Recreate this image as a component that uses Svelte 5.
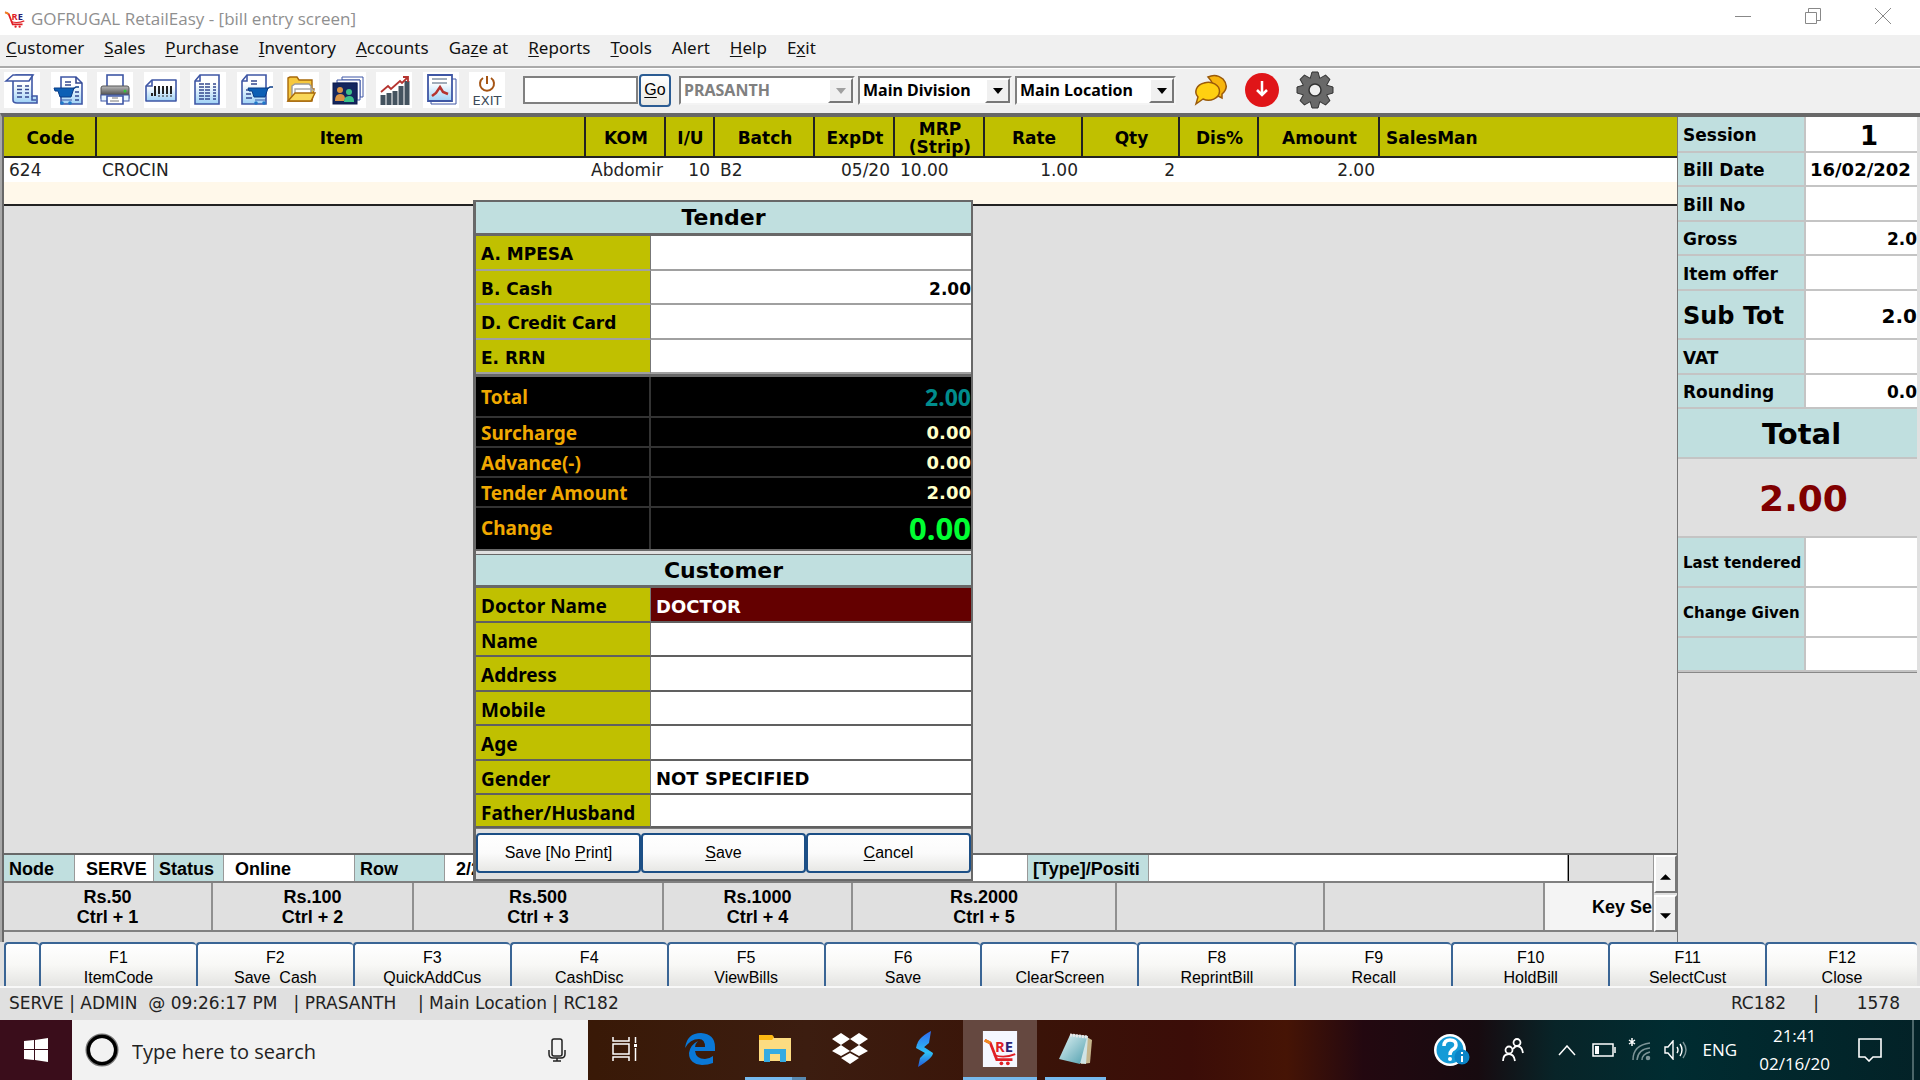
<script lang="ts">
  type Field = { id: string; label: string; value: string };

  // [text before the access key, access key, rest]
  const menu = [
    ['', 'C', 'ustomer'], ['', 'S', 'ales'], ['', 'P', 'urchase'], ['', 'I', 'nventory'],
    ['', 'A', 'ccounts'], ['Ga', 'z', 'e at'], ['', 'R', 'eports'], ['', 'T', 'ools'],
    ['Alert', '', ''], ['', 'H', 'elp'], ['E', 'x', 'it'],
  ];

  const tools = ['bill', 'billcart', 'printer', 'barcode', 'list', 'listcart', 'folder', 'people', 'chart', 'report', 'exit'];

  const columns = [
    { name: 'Code', width: 93, value: '624', align: 'left' },
    { name: 'Item', width: 489, value: 'CROCIN', align: 'left' },
    { name: 'KOM', width: 80, value: 'Abdomir', align: 'left' },
    { name: 'I/U', width: 49, value: '10', align: 'right' },
    { name: 'Batch', width: 100, value: 'B2', align: 'left' },
    { name: 'ExpDt', width: 80, value: '05/20', align: 'right' },
    { name: 'MRP (Strip)', width: 90, value: '10.00', align: 'left' },
    { name: 'Rate', width: 98, value: '1.00', align: 'right' },
    { name: 'Qty', width: 97, value: '2', align: 'right' },
    { name: 'Dis%', width: 79, value: '', align: 'right' },
    { name: 'Amount', width: 121, value: '2.00', align: 'right' },
    { name: 'SalesMan', width: 0, value: '', align: 'left' },
  ];

  let tender: Field[] = $state([
    { id: 'mpesa', label: 'A. MPESA', value: '' },
    { id: 'cash', label: 'B. Cash', value: '2.00' },
    { id: 'card', label: 'D. Credit Card', value: '' },
    { id: 'rrn', label: 'E. RRN', value: '' },
  ]);

  const totals = [
    { label: 'Total', value: '2.00', kind: 'total' },
    { label: 'Surcharge', value: '0.00', kind: '' },
    { label: 'Advance(-)', value: '0.00', kind: '' },
    { label: 'Tender Amount', value: '2.00', kind: '' },
    { label: 'Change', value: '0.00', kind: 'change' },
  ];

  let customer: Field[] = $state([
    { id: 'doctor', label: 'Doctor Name', value: 'DOCTOR' },
    { id: 'name', label: 'Name', value: '' },
    { id: 'address', label: 'Address', value: '' },
    { id: 'mobile', label: 'Mobile', value: '' },
    { id: 'age', label: 'Age', value: '' },
    { id: 'gender', label: 'Gender', value: 'NOT SPECIFIED' },
    { id: 'father', label: 'Father/Husband', value: '' },
  ]);

  const summary = [
    { label: 'Session', value: '1', kind: 'session' },
    { label: 'Bill Date', value: '16/02/202', kind: 'date' },
    { label: 'Bill No', value: '', kind: '' },
    { label: 'Gross', value: '2.0', kind: '' },
    { label: 'Item offer', value: '', kind: '' },
    { label: 'Sub Tot', value: '2.0', kind: 'sub' },
    { label: 'VAT', value: '', kind: '' },
    { label: 'Rounding', value: '0.0', kind: '' },
  ];

  const cash = [
    ['Rs.50', 'Ctrl + 1'], ['Rs.100', 'Ctrl + 2'], ['Rs.500', 'Ctrl + 3'],
    ['Rs.1000', 'Ctrl + 4'], ['Rs.2000', 'Ctrl + 5'], ['', ''], ['', ''],
  ];

  const fkeys = [
    'ItemCode', 'Save  Cash', 'QuickAddCus', 'CashDisc', 'ViewBills', 'Save',
    'ClearScreen', 'ReprintBill', 'Recall', 'HoldBill', 'SelectCust', 'Close',
  ];

  let quick = $state('');
</script>

{#snippet cartLogo()}
  <path d="M1 9 L7 12 L14 30 H31" fill="none" stroke="#e01f26" stroke-width="3" />
  <path d="M1 9 L7 12" fill="none" stroke="#f08a1d" stroke-width="3" />
  <path d="M11 25 Q22 29 34 24" fill="none" stroke="#e01f26" stroke-width="2" />
  <circle cx="19" cy="34" r="2" fill="#e01f26" /><circle cx="26" cy="34" r="2" fill="#e01f26" />
  <text x="12" y="22" font-size="16" font-weight="bold" font-family="Open Sans, sans-serif"><tspan fill="#e01f26">R</tspan><tspan fill="#2a2273">E</tspan></text>
{/snippet}

{#snippet cart(dx: number)}
  <g transform="translate({dx} 0)">
    <path d="M2 16 H22 L19 25 H8 L6 19 H3 Z" fill="#0d5fb5" stroke="#0a3d86" />
    <path d="M21 17 L24 15 H27" fill="none" stroke="#0a3d86" stroke-width="1.5" />
    <path d="M9 28 H20" stroke="#3d5aa8" />
    <circle cx="10" cy="31" r="1.8" fill="#1f77c9" /><circle cx="18" cy="31" r="1.8" fill="#1f77c9" />
  </g>
{/snippet}

{#snippet toolIcon(name: string)}
  <svg viewBox="0 0 36 36" width="36" height="36" aria-hidden="true">
    {#if name === 'bill'}
      <path d="M9 9 L12 3 H28 V24 H33 V31 H13 Q9 31 9 28 Z" fill="url(#sheet)" stroke="#3f57a5" stroke-width="1.6" />
      <path d="M2 9 L9 3 H29 L25 9 Z" fill="#fff" stroke="#3f57a5" stroke-width="1.6" />
      <path d="M13 14 H18 M13 17.5 H18 M13 21 H18 M13 25 H18 M21 14 H25 M21 17.5 H25 M21 21 H25 M21 25 H25" stroke="#34488f" stroke-width="1.6" />
      <path d="M28 24 V28 H32" fill="none" stroke="#3f57a5" stroke-width="1.6" />
    {:else if name === 'billcart'}
      <path d="M10 5 H25 L31 11 V32 H10 Z" fill="url(#sheet)" stroke="#3f57a5" stroke-width="1.6" />
      <path d="M25 5 V11 H31 M14 10 H20 M14 13 H20 M24 20 H28 M24 24 H28 M24 28 H28" fill="none" stroke="#34488f" stroke-width="1.6" />
      {@render cart(1)}
    {:else if name === 'printer'}
      <rect x="10" y="3" width="16" height="14" fill="#fff" stroke="#3f57a5" stroke-width="1.6" />
      <rect x="4" y="14" width="28" height="14" rx="2" fill="url(#metal)" stroke="#555" />
      <rect x="4" y="23" width="28" height="6" fill="#e5f2fd" stroke="#3f57a5" />
      <circle cx="28" cy="19" r="1.5" fill="#35c13c" />
      <path d="M10 24 H26 V32 H10 Z" fill="#fff" stroke="#3f57a5" stroke-width="1.6" />
      <path d="M15 26 H21 M13 29 H22" stroke="#777" />
    {:else if name === 'barcode'}
      <path d="M8 8 H32 V29 H2 V14 Z" fill="url(#sheet)" stroke="#3f57a5" stroke-width="1.6" stroke-linejoin="round" />
      <path d="M2 14 H8 V8" fill="none" stroke="#3f57a5" stroke-width="1.6" />
      <path d="M8 21 V24 M11 14 V24 M15 14 V22 M19 14 V22 M23 14 V22 M27 14 V22" stroke="#222" stroke-width="2" />
      <path d="M14 24 H28" stroke="#222" stroke-dasharray="2 2" />
    {:else if name === 'list' || name === 'listcart'}
      <path d="M10 3 H29 V32 H5 V9 Z" fill="url(#sheet)" stroke="#3f57a5" stroke-width="1.6" />
      <path d="M5 9 H10 V3" fill="none" stroke="#3f57a5" stroke-width="1.6" />
      {#if name === 'list'}
        <path d="M9 12 H21 M9 15 H21 M9 18 H21 M9 21 H21 M9 24 H21 M9 27 H21 M23 12 H26 M23 15 H26 M23 18 H26 M23 21 H26 M23 24 H26 M23 27 H26" stroke="#34488f" stroke-width="1.5" stroke-dasharray="5 1" />
      {:else}
        <path d="M14 9 H20 M14 12 H20 M9 18 H13 M9 22 H14 M9 26 H15" stroke="#34488f" stroke-width="1.6" />
        {@render cart(9)}
      {/if}
    {:else if name === 'folder'}
      <path d="M5 29 V6 L7 5 H14 L16 8 H29 V17 H31 L29 29 Z" fill="#f6c83e" stroke="#a8690b" stroke-width="1.4" />
      <path d="M9 24 V14 L12 12 H26 L28 14 V23" fill="#fff" stroke="#999" stroke-width="1.4" />
      <path d="M12 22 V17 H29 L31 19" fill="none" stroke="#aaa" stroke-width="1.4" />
      <path d="M5 29 L12 21 H32 L28 29 Z" fill="#f9d758" stroke="#a8690b" stroke-width="1.4" />
    {:else if name === 'people'}
      <path d="M12 5 H33 V25 H30 V8 H12 Z" fill="#fff" stroke="#3f57a5" />
      <path d="M7 8 H30 V28 H27 V11 H7 Z" fill="#fff" stroke="#3f57a5" />
      <rect x="3" y="11" width="24" height="21" fill="#14265e" stroke="#0d1a4a" />
      <circle cx="10" cy="18" r="3" fill="#d99445" /><path d="M5 29 Q5 22 10 22 Q15 22 15 27 L14 29 Z" fill="#d99445" />
      <circle cx="19" cy="20" r="3" fill="#3cc18b" /><path d="M14 30 Q14 24 19 24 Q24 24 24 29 V30 Z" fill="#3cc18b" />
    {:else if name === 'chart'}
      <path d="M7 33 V23 M13 33 V21 M19 33 V19 M25 33 V14 M31 33 V9" stroke="#44535f" stroke-width="5" />
      <path d="M5 20 L12 14 L15 17 L24 9 L26 11 L32 5 M27 5 H32 V10" fill="none" stroke="#b5332f" stroke-width="1.8" />
    {:else if name === 'report'}
      <path d="M8 7 H33 V32 H8 Z" fill="#fff" stroke="#3f57a5" />
      <path d="M5 3 H29 V29 H5 Z" fill="url(#sheet)" stroke="#3f57a5" stroke-width="1.8" />
      <path d="M9 7 H24 M9 11 H24" stroke="#8293a5" stroke-width="1.5" />
      <path d="M9 24 L13 21 L17 15 L20 20 L25 22" fill="none" stroke="#b5332f" stroke-width="2.5" />
    {:else}
      <path d="M14 6 A7 7 0 1 0 22 6 M18 4 V12" fill="none" stroke="#a55413" stroke-width="2" />
      <text x="18" y="33" font-size="13" text-anchor="middle" font-family="DejaVu Sans, sans-serif" fill="#3c4a57">EXIT</text>
    {/if}
  </svg>
{/snippet}

{#snippet field(f: Field)}
  <div class="field">
    <label for={f.id}>{f.label}</label>
    <input id={f.id} type="text" class:active={f.id === 'doctor'} bind:value={f.value} />
  </div>
{/snippet}

<svg class="defs" width="0" height="0" aria-hidden="true">
  <defs>
    <linearGradient id="sheet" x1="0" y1="0" x2="0" y2="1"><stop offset="0.3" stop-color="#fff" /><stop offset="1" stop-color="#9fd2f6" /></linearGradient>
    <linearGradient id="metal" x1="0" y1="0" x2="0" y2="1"><stop offset="0" stop-color="#bbb" /><stop offset="0.6" stop-color="#555" /><stop offset="1" stop-color="#888" /></linearGradient>
    <linearGradient id="bolt" x1="0" y1="0" x2="0" y2="1"><stop offset="0" stop-color="#2f6bf2" /><stop offset="0.6" stop-color="#2ec0f5" /><stop offset="1" stop-color="#2457d6" /></linearGradient>
    <linearGradient id="pad" x1="0" y1="0" x2="1" y2="1"><stop offset="0" stop-color="#e2f3f5" /><stop offset="1" stop-color="#4f9fae" /></linearGradient>
  </defs>
</svg>

<div class="screen">
  <header class="titlebar">
    <svg viewBox="0 0 36 38" width="22" height="22" aria-hidden="true">{@render cartLogo()}</svg>
    <h1>GOFRUGAL RetailEasy - [bill entry screen]</h1>
    <div class="window-buttons">
      <button type="button" aria-label="Minimize"><svg viewBox="0 0 16 16"><path d="M0 8.5 H16" /></svg></button>
      <button type="button" aria-label="Restore"><svg viewBox="0 0 16 16"><path d="M0.5 4.5 H11.5 V15.5 H0.5 Z M3.5 4.5 V0.5 H15.5 V12.5 H11.5" /></svg></button>
      <button type="button" aria-label="Close window"><svg viewBox="0 0 16 16"><path d="M0 0 L16 16 M16 0 L0 16" /></svg></button>
    </div>
  </header>

  <nav class="menu" aria-label="Main menu">
    {#each menu as [before, key, rest]}
      <a href="#{before}{key}{rest}">{before}<u>{key}</u>{rest}</a>
    {/each}
  </nav>

  <div class="toolbar">
    <div class="tools">
      {#each tools as name}
        <button type="button" aria-label={name}>{@render toolIcon(name)}</button>
      {/each}
    </div>
    <input class="quick" type="text" aria-label="Quick access" bind:value={quick} />
    <button type="button" class="go"><u>G</u>o</button>
    <div class="combo user">
      <select aria-label="User" disabled><option>PRASANTH</option></select>
      <span aria-hidden="true"></span>
    </div>
    <div class="combo division">
      <select aria-label="Division"><option>Main Division</option></select>
      <span aria-hidden="true"></span>
    </div>
    <div class="combo location">
      <select aria-label="Location"><option>Main Location</option></select>
      <span aria-hidden="true"></span>
    </div>
    <div class="round-tools">
      <button type="button" aria-label="Messages">
        <svg viewBox="0 0 36 32" width="36" height="32">
          <path d="M16 3 Q24 -1 31 5 Q38 13 30 20 L30 24 L24 21 Q22 9 16 3 Z" fill="#f7b50e" stroke="#9a5a0a" stroke-width="1.5" />
          <path d="M12 9 A11 9 0 1 1 11 25 L4 30 L6 23 A11 9 0 0 1 12 9 Z" fill="#ffd011" stroke="#9a5a0a" stroke-width="1.5" />
        </svg>
      </button>
      <button type="button" aria-label="Download">
        <svg viewBox="0 0 34 34" width="34" height="34"><circle cx="17" cy="17" r="17" fill="#e01518" /><path d="M17 8 V22 M12 17 L17 22 L22 17" fill="none" stroke="#fff" stroke-width="2.5" /></svg>
      </button>
      <button type="button" aria-label="Settings">
        <svg viewBox="-19 -19 38 38" width="38" height="38">
          {#each [0, 45, 90, 135, 180, 225, 270, 315] as angle}
            <path transform="rotate({angle})" d="M-5 -11 L-3 -18 H3 L5 -11 Z" fill="#696969" stroke="#333" />
          {/each}
          <circle r="12.5" fill="#696969" /><circle r="6" fill="#efefef" stroke="#333" stroke-width="1.5" />
        </svg>
      </button>
    </div>
  </div>

  <main class="workspace">
    <section class="bill">
      <table class="items">
        <colgroup>
          {#each columns as c}
            <col style:width={c.width ? `${c.width}px` : 'auto'} />
          {/each}
        </colgroup>
        <thead>
          <tr>{#each columns as c}<th class:last={c.name === 'SalesMan'}>{c.name}</th>{/each}</tr>
        </thead>
        <tbody>
          <tr>{#each columns as c}<td style:text-align={c.align}>{c.value}</td>{/each}</tr>
          <tr class="next"><td colspan={columns.length}></td></tr>
        </tbody>
      </table>
      <div class="blank"></div>

      <div class="strip">
        <div class="strip-grid">
          <div class="status-row">
            <b>Node</b><span>SERVE</span><b>Status</b><span>Online</span><b>Row</b><span>2/2</span>
            <b></b><span></span><b></b><span></span><b class="type">[Type]/Positi</b><span></span><i></i>
          </div>
          <div class="cash-row">
            {#each cash as [amount, key]}
              <button type="button" aria-label={amount || 'Unassigned'}>{amount}<br />{key}</button>
            {/each}
            <button type="button" class="key-setup">Key Se</button>
          </div>
        </div>
        <div class="scroller">
          <button type="button" aria-label="Scroll up"><svg viewBox="0 0 12 6"><path d="M0 6 L6 0 L12 6 Z" /></svg></button>
          <button type="button" aria-label="Scroll down"><svg viewBox="0 0 12 6"><path d="M0 0 L6 6 L12 0 Z" /></svg></button>
        </div>
      </div>

      <form class="dialog" aria-label="Tender" onsubmit={(e) => e.preventDefault()}>
        <h2>Tender</h2>
        <div class="fields tender">
          {#each tender as f (f.id)}{@render field(f)}{/each}
        </div>
        <dl class="totals">
          {#each totals as t}
            <div class={t.kind}><dt>{t.label}</dt><dd>{t.value}</dd></div>
          {/each}
        </dl>
        <h2 class="second">Customer</h2>
        <div class="fields customer">
          {#each customer as f (f.id)}{@render field(f)}{/each}
        </div>
        <div class="actions">
          <button type="button">Save [No <u>P</u>rint]</button>
          <button type="submit"><u>S</u>ave</button>
          <button type="button"><u>C</u>ancel</button>
        </div>
      </form>
    </section>

    <aside class="side">
      <table>
        <tbody>
          {#each summary as s}
            <tr class={s.kind}><th>{s.label}</th><td>{s.value}</td></tr>
          {/each}
          <tr class="grand"><th colspan="2">Total</th></tr>
          <tr class="grand-value"><td colspan="2">2.00</td></tr>
          <tr class="tall"><th>Last tendered</th><td></td></tr>
          <tr class="tall"><th>Change Given</th><td></td></tr>
          <tr><th></th><td></td></tr>
        </tbody>
      </table>
    </aside>
  </main>

  <div class="fkeys">
    <button type="button" aria-label="More keys"></button>
    {#each fkeys as name, i}
      <button type="button"><span>F{i + 1}</span><span>{name}</span></button>
    {/each}
  </div>

  <footer class="status">
    <p>SERVE | ADMIN  @ 09:26:17 PM   | PRASANTH    | Main Location | RC182</p>
    <p>RC182     |       1578</p>
  </footer>

  <div class="taskbar">
    <button type="button" class="start" aria-label="Start">
      <svg viewBox="0 0 24 24" width="24" height="24"><path d="M0 3 L10 2 V11 H0 Z M11 2 L24 0 V11 H11 Z M0 12 H10 V22 L0 21 Z M11 12 H24 V24 L11 22 Z" fill="#fff" /></svg>
    </button>
    <div class="search">
      <svg viewBox="0 0 36 36" width="34" height="34" aria-hidden="true"><circle cx="18" cy="18" r="15" fill="none" stroke="#777" stroke-width="5" /><circle cx="18" cy="18" r="14.5" fill="none" stroke="#000" stroke-width="3.5" /></svg>
      <input type="search" placeholder="Type here to search" aria-label="Type here to search" />
      <svg viewBox="0 0 18 24" width="18" height="24" fill="none" stroke="#222" stroke-width="1.5" aria-hidden="true"><rect x="4" y="1" width="10" height="17" rx="2" /><path d="M1 12 V16 Q1 20 5 20 H13 Q17 20 17 16 V12 M9 20 V23 M5 23 H13" /></svg>
    </div>
    <div class="apps">
      <button type="button" aria-label="Task view"><svg viewBox="0 0 26 24" width="26" height="24" fill="none" stroke="#fff" stroke-width="1.5"><path d="M1 0 V4 H17 V0 M1 24 V20 H17 V24 M1 7 H17 V17 H1 Z M23.5 0 V6 M23.5 11 V24" /><path d="M22 8.5 H25" stroke-width="3" /></svg></button>
      <button type="button" aria-label="Edge"><svg viewBox="0 0 30 32" width="30" height="32"><path d="M0 15 Q2 0 16 0 Q30 1 30 14 V18 H10 Q11 26 20 26 Q24 26 28 23 V30 Q23 32 17 32 Q4 31 4 20 Q5 12 13 8 Q10 11 10 14 H20 Q20 6 14 6 Q5 6 0 15 Z" fill="#0a78d7" /></svg></button>
      <button type="button" class="open stacked" aria-label="File Explorer"><svg viewBox="0 0 32 27" width="32" height="27"><path d="M0 0 H13 L15 3 H32 V26 H0 Z" fill="#fddc81" /><path d="M0 0 H13 L15 2 L13 5 H0 Z" fill="#fdb913" /><path d="M5 27 V14 H27 V27 H21 V19 H11 V27 Z" fill="#35abe2" /></svg></button>
      <button type="button" aria-label="Dropbox"><svg viewBox="0 0 36 31" width="36" height="31" fill="#fff"><path d="M9 0 L18 6 L9 12 L0 6 Z M27 0 L36 6 L27 12 L18 6 Z M9 12 L18 18 L9 23 L0 18 Z M27 12 L36 18 L27 23 L18 18 Z M18 20 L27 25 L18 31 L9 25 Z" /></svg></button>
      <button type="button" aria-label="Sync"><svg viewBox="0 0 20 36" width="20" height="36"><path d="M16 0 L14 12 L8 17 L2 16 Q1 8 16 0 Z M2 13 L9 16 L18 22 Q18 27 3 36 L5 27 L10 22 L1 17 Z" fill="url(#bolt)" /></svg></button>
      <button type="button" class="current" aria-label="RetailEasy"><svg viewBox="-1 -1 37 39" width="36" height="36"><rect x="-1" y="-1" width="37" height="39" fill="#f5f7ff" />{@render cartLogo()}</svg></button>
      <button type="button" class="open" aria-label="Notepad"><svg viewBox="0 0 33 32" width="33" height="32"><path d="M26 3 L33 7 L31 30 L22 31 Z" fill="#c5b58c" /><path d="M12 1 L29 3 L27 31 L20 30 Z" fill="#cfe3e5" /><path d="M11 2 L28 4 L21 31 L0 26 Z" fill="url(#pad)" /><path d="M11 2 L28 4" stroke="#e9e9e9" stroke-width="3" stroke-dasharray="2 1" /></svg></button>
    </div>
    <div class="tray">
      <svg class="help" viewBox="0 0 36 32" width="36" height="32"><circle cx="16" cy="16" r="16" fill="#fff" /><circle cx="16" cy="16" r="13.5" fill="#149bd7" /><path d="M10 12 Q10 6 16 6 Q22 6 22 11 Q22 14 18 16 Q16 18 16 21" fill="none" stroke="#fff" stroke-width="3.5" /><circle cx="16" cy="25" r="2" fill="#fff" /><circle cx="28" cy="23" r="7.5" fill="#0b84c7" /><path d="M28 22 V28 M28 18 V20" stroke="#fff" stroke-width="2" /></svg>
      <svg class="friends" viewBox="0 0 22 24" width="22" height="24" fill="none" stroke="#fff" stroke-width="1.8"><circle cx="15" cy="4.5" r="3.5" /><circle cx="7" cy="12" r="3.5" /><path d="M1 23 Q1 16 7 16 Q12 16 13 23 M11 11 Q13 8 15 8 Q20 8 21 15" /></svg>
      <svg class="chevron" viewBox="0 0 18 11" width="18" height="11" fill="none" stroke="#fff" stroke-width="1.5"><path d="M1 10 L9 1 L17 10" /></svg>
      <svg class="battery" viewBox="0 0 24 14" width="24" height="14" fill="none" stroke="#fff" stroke-width="1.5"><path d="M1 1 H21 V13 H1 Z M23 4 V10" /><path d="M3 3 H7 V11 H3 Z" fill="#fff" stroke="none" /></svg>
      <svg class="wifi" viewBox="0 0 24 24" width="24" height="24" fill="none" stroke="#7c9497" stroke-width="1.5"><path d="M5 22 Q5 7 22 5 M9 22 Q10 11 22 10 M14 22 Q14 16 22 14" /><circle cx="20" cy="20" r="1.5" fill="#7c9497" /><path d="M4 0 V8 M1 2 L7 6 M7 2 L1 6" stroke="#fff" /></svg>
      <svg class="sound" viewBox="0 0 24 20" width="24" height="20" fill="none" stroke="#fff" stroke-width="1.4"><path d="M1 7 H4 L9 1 V19 L4 13 H1 Z M13 7 Q15 10 13 13" /><path d="M16 4 Q20 10 16 16" /><path d="M19 2 Q25 10 19 18" stroke="#7c9497" /></svg>
      <span class="lang">ENG</span>
      <time>21:41<br />02/16/20</time>
      <svg class="notice" viewBox="0 0 24 24" width="24" height="24" fill="none" stroke="#fff" stroke-width="1.6"><path d="M1 1 H23 V19 H15 L11 23 L7 19 H1 Z" /></svg>
    </div>
  </div>
</div>

<style>
  :global(body) {
    background: #e0e0e0;
  }
  :global(*) {
    box-sizing: border-box;
  }
  .defs {
    position: absolute;
  }
  .screen {
    --olive: #c0c000;
    --aqua: #c0dfdf;
    --gray: #e0e0e0;
    --line: #686868;
    display: flex;
    flex-direction: column;
    min-height: 100vh;
    background: var(--gray);
    color: #000;
    font: 17px/20px "DejaVu Sans", sans-serif;
  }
  button,
  input,
  select {
    font: inherit;
    color: inherit;
    padding: 0;
    border: 0;
    border-radius: 0;
    outline: 0;
    background: none;
  }
  u {
    text-underline-offset: 2px;
  }

  .titlebar {
    display: flex;
    align-items: center;
    height: 35px;
    padding: 0 2px 0 4px;
    gap: 5px;
    background: #fff;
  }
  h1 {
    flex: 1;
    margin: 0;
    padding-top: 2px;
    font: 17px/24px "Open Sans", sans-serif;
    color: #8f8f8f;
  }
  .window-buttons {
    display: flex;
  }
  .window-buttons button {
    width: 70px;
    height: 35px;
  }
  .window-buttons svg {
    width: 16px;
    height: 16px;
    fill: none;
    stroke: #888;
  }

  .menu {
    display: flex;
    gap: 20px;
    height: 33px;
    padding: 2px 6px 0;
    background: #f0f0f0;
    border-bottom: 2px solid #aaa;
    font: 17px/22px "Noto Sans", sans-serif;
  }
  .menu a {
    color: #111;
    text-decoration: none;
  }

  .toolbar {
    display: flex;
    align-items: center;
    height: 45px;
    padding: 0 0 2px 4px;
    background: #f0f0f0;
    border-top: 1px solid #fff;
  }
  .tools {
    display: flex;
    justify-content: space-between;
    width: 501px;
    margin-right: 18px;
  }
  .tools button {
    width: 36px;
    height: 36px;
    background: #fff;
  }
  .tools svg,
  .round-tools svg {
    display: block;
  }
  .quick {
    width: 115px;
    height: 28px;
    background: #fff;
    border: 2px solid #808080;
  }
  .go {
    width: 32px;
    height: 33px;
    margin: 0 8px 0 1px;
    border: 2px solid #2b5c93;
    border-radius: 4px;
    background: linear-gradient(#fff, #e8e8e4);
    font-family: "Liberation Sans", sans-serif;
    font-size: 16px;
  }
  .combo {
    position: relative;
    height: 29px;
    margin-right: 3px;
    background: #fff;
    border: 2px solid;
    border-color: #808080 #f4f4f4 #f4f4f4 #808080;
  }
  .combo select {
    appearance: none;
    width: 100%;
    height: 25px;
    padding-left: 3px;
    font: bold 16px/24px "Noto Sans", sans-serif;
    opacity: 1;
  }
  .combo select:disabled {
    color: #808080;
  }
  .combo span {
    position: absolute;
    top: 0;
    right: 0;
    width: 25px;
    height: 25px;
    background: #f0f0f0;
    border: 2px solid;
    border-color: #fff #777 #777 #fff;
    pointer-events: none;
  }
  .combo span::after {
    content: '';
    display: block;
    width: 0;
    margin: 8px auto 0;
    border: 5px solid transparent;
    border-top: 6px solid #000;
    border-bottom: 0;
  }
  .user span::after {
    border-top-color: #a0a0a0;
  }
  .user {
    width: 176px;
  }
  .division {
    width: 154px;
  }
  .location {
    width: 161px;
  }
  .round-tools {
    display: flex;
    align-items: center;
    gap: 17px;
    margin-left: 13px;
  }

  .workspace {
    display: flex;
    flex: 1;
    border-top: 4px solid var(--line);
    border-left: 2px solid #a8a8a8;
    padding-right: 3px;
  }
  .bill {
    position: relative;
    flex: 1;
    min-width: 0;
    display: flex;
    flex-direction: column;
    border-left: 2px solid var(--line);
    border-right: 1px solid #777;
  }
  .items {
    table-layout: fixed;
    width: 100%;
    border-spacing: 0;
    border-bottom: 2px solid #222;
  }
  .items th {
    height: 41px;
    padding: 2px 4px 0 6px;
    background: var(--olive);
    border-right: 2px solid #222;
    border-bottom: 2px solid #222;
    line-height: 18px;
  }
  .items th.last {
    border-right: 0;
    text-align: left;
  }
  .items td {
    height: 24px;
    padding: 0 5px;
    background: #fff;
    white-space: nowrap;
    color: #222;
  }
  .items .next td {
    height: 22px;
    background: #fff8ea;
  }
  .blank {
    flex: 1;
  }

  .strip {
    display: flex;
    border-top: 2px solid var(--line);
    margin-bottom: 10px;
    font: bold 18px/20px "Liberation Sans", sans-serif;
  }
  .strip-grid {
    flex: 1;
    min-width: 0;
  }
  .status-row {
    display: grid;
    grid-template-columns: 71px 79px 70px 131px 90px 130px 120px 131px 59px 143px 121px 1fr 86px;
    height: 28px;
    line-height: 28px;
    background: #fff;
    border-bottom: 2px solid #808080;
  }
  .status-row > * {
    overflow: hidden;
    white-space: nowrap;
    border-right: 1px solid #999;
    padding-left: 11px;
  }
  .status-row b {
    background: var(--aqua);
    padding-left: 5px;
  }
  .status-row i {
    background: var(--gray);
    border-left: 1px solid #000;
  }
  .cash-row {
    display: grid;
    grid-template-columns: 209px 201px 250px 189px 264px 208px 1fr 109px;
    height: 49px;
    border-bottom: 2px solid #808080;
  }
  .cash-row button {
    border-right: 2px solid #909090;
  }
  .cash-row .key-setup {
    background: #f4f4f4;
    text-align: right;
    white-space: nowrap;
  }
  .scroller {
    display: flex;
    flex-direction: column;
    gap: 2px;
    width: 23px;
  }
  .scroller button {
    flex: 1;
    background: #f0f0f0;
    border: 2px solid;
    border-color: #fff #777 #777 #fff;
  }
  .scroller svg {
    width: 11px;
    height: 6px;
  }

  /* sits over the bill grid */
  .dialog {
    position: absolute;
    top: 83px;
    left: 469px;
    width: 500px;
    background: var(--gray);
    border: 2px solid var(--line);
    border-left-width: 3px;
  }
  h2 {
    height: 34px;
    margin: 0;
    background: var(--aqua);
    border-bottom: 3px solid var(--line);
    font-size: 22px;
    line-height: 31px;
    text-align: center;
  }
  .second {
    margin-top: 3px;
    border-top: 1px solid var(--line);
  }
  .field {
    display: grid;
    grid-template-columns: 175px 1fr;
  }
  .field label,
  .field input {
    height: 35px;
    border-bottom: 2px solid #a0a0a0;
    font-weight: bold;
  }
  .field:nth-child(even) label,
  .field:nth-child(even) input {
    height: 34px;
  }
  .field label {
    padding: 8px 0 0 5px;
    background: var(--olive);
    border-right: 1px solid #777;
  }
  .field input {
    width: 100%;
    padding: 3px 0 0 5px;
    background: #fff;
  }
  .tender {
    border-bottom: 3px solid var(--line);
  }
  .tender input {
    text-align: right;
  }
  .customer label {
    font: bold 19px/20px "Noto Sans", sans-serif;
  }
  .customer input {
    font-size: 18px;
  }
  .customer .field label,
  .customer .field input {
    border-bottom-color: #606060;
  }
  .customer .field:last-child label,
  .customer .field:last-child input {
    height: 33px;
  }
  .field input.active {
    background: #640000;
    color: #fff;
  }
  .totals {
    margin: 0;
    background: #000;
    border-bottom: 2px solid var(--line);
    font: bold 19px/28px "Noto Sans", sans-serif;
  }
  .totals div {
    display: grid;
    grid-template-columns: 175px 1fr;
    height: 30px;
    line-height: 30px;
    border-bottom: 2px solid #333;
  }
  .totals .total,
  .totals .change {
    height: 41px;
    line-height: 40px;
  }
  .totals .change {
    border-bottom: 0;
  }
  dt {
    padding-left: 5px;
    color: #f0a800;
    border-right: 2px solid #333;
  }
  dd {
    margin: 0;
    text-align: right;
    color: #ffffc8;
    font-family: "DejaVu Sans", sans-serif;
    font-size: 18px;
  }
  .total dd {
    color: #008c8c;
    font-family: "Noto Sans", sans-serif;
    font-size: 23px;
  }
  .change dd {
    color: #00ff32;
    font-family: "Noto Sans", sans-serif;
    font-size: 31px;
  }
  .actions {
    display: grid;
    grid-template-columns: repeat(3, 1fr);
    padding: 4px 0 6px;
    border-top: 1px solid #777;
  }
  .actions button {
    height: 40px;
    border: 2px solid #1c4f86;
    border-radius: 4px;
    background: linear-gradient(#fff, #fbfbfb 50%, #e8e8e5);
    font: 16px/20px "Liberation Sans", sans-serif;
  }

  .side {
    width: 239px;
  }
  .side table {
    table-layout: fixed;
    width: 100%;
    border-spacing: 0;
    border-bottom: 1px solid #888;
  }
  .side th,
  .side td {
    height: 35px;
    padding: 2px 0 0 5px;
    border-bottom: 2px solid #c4c4c4;
    overflow: hidden;
    white-space: nowrap;
    font-weight: bold;
  }
  .side tr:nth-child(2) > *,
  .side tr:nth-child(4) > *,
  .side tr:nth-child(8) > *,
  .side tr:last-child > * {
    height: 34px;
  }
  .side .session > * {
    height: 36px;
  }
  .side th {
    width: 128px;
    text-align: left;
    background: var(--aqua);
    border-right: 2px solid #c4c4c4;
  }
  .side td {
    text-align: right;
    background: #fff;
  }
  .side .session td {
    padding: 4px 0 0 15px;
    text-align: center;
    font-size: 26px;
  }
  .side .date td {
    padding-left: 4px;
    text-align: left;
    font-size: 18px;
  }
  .side .sub > * {
    height: 49px;
    font-size: 20px;
  }
  .side .sub th {
    font-size: 24px;
  }
  .side .grand th {
    height: 50px;
    padding: 2px 0 0 8px;
    border-right: 0;
    font-size: 29px;
    text-align: center;
  }
  .side .grand-value td {
    height: 79px;
    padding: 2px 0 0 12px;
    background: var(--gray);
    color: #800000;
    font-size: 36px;
    text-align: center;
  }
  .side .tall > * {
    height: 50px;
    font-size: 15px;
  }

  .fkeys {
    display: grid;
    grid-template-columns: 35px repeat(11, 157fr) 152fr;
    padding: 0 3px 0 4px;
    border-bottom: 2px solid #f8f8f8;
    font: 16px/20px "Liberation Sans", sans-serif;
  }
  .fkeys button {
    display: flex;
    flex-direction: column;
    align-items: center;
    height: 44px;
    padding-top: 4px;
    border: solid #3a6595;
    border-width: 2px 0 0 2px;
    border-radius: 4px 4px 0 0;
    background: linear-gradient(#fff, #f8f8f6 50%, #e4e4e2);
    white-space: pre;
  }
  .status {
    display: flex;
    justify-content: space-between;
    height: 32px;
    padding: 5px 20px 0 9px;
    color: #222;
  }
  .status p {
    margin: 0;
    white-space: pre;
  }

  .taskbar {
    display: flex;
    height: 60px;
    color: #fff;
    font-family: "Open Sans", sans-serif;
    background: linear-gradient(90deg, #3a0d1b 0, #3a0d1b 4%, #391907 31%, #3c1d10 42%, #3a1408 53%, #3b0d08 62%, #461405 67%, #230810 71%, #170b10 77%, #082428 81%, #002c31 87%, #032227 100%);
  }
  .start {
    display: grid;
    place-items: center;
    width: 72px;
  }
  .search {
    display: flex;
    align-items: center;
    width: 516px;
    padding: 0 22px 0 13px;
    gap: 13px;
    background: #f2f2f2;
  }
  .search input {
    flex: 1;
    min-width: 0;
    padding-top: 2px;
    font-size: 20px;
    color: #222;
  }
  .search input::placeholder {
    color: #222;
    opacity: 1;
  }
  .apps {
    display: flex;
    flex: 1;
  }
  .apps button {
    display: grid;
    place-items: center;
    width: 74px;
    margin-right: 1px;
    border-bottom: 3px solid transparent;
  }
  .apps .open {
    background: linear-gradient(#76b9ed, #76b9ed) 50% 100% / 61px 3px no-repeat border-box;
  }
  .apps .stacked {
    background: linear-gradient(90deg, #76b9ed 47px, #5889b0 47px) 50% 100% / 61px 3px no-repeat border-box;
  }
  .apps .current {
    background: #654840;
    border-bottom-color: #76b9ed;
  }
  .tray {
    display: flex;
    align-items: center;
    padding-right: 30px;
    margin-right: 6px;
    border-right: 2px solid #4c6669;
    font-size: 17px;
  }
  .help {
    margin-right: 32px;
  }
  .friends {
    margin-right: 34px;
  }
  .chevron {
    margin-right: 16px;
  }
  .battery,
  .wifi {
    margin-right: 12px;
  }
  .sound {
    margin-right: 15px;
  }
  .lang {
    margin-right: 22px;
  }
  time {
    margin-right: 28px;
    line-height: 28px;
    text-align: center;
  }
</style>
